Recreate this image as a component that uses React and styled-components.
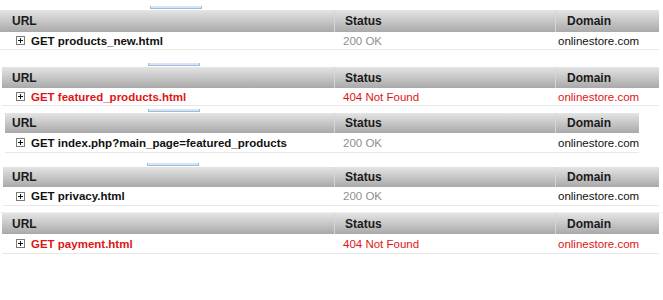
import React from "react";
import styled, { createGlobalStyle } from "styled-components";

const GlobalStyle = createGlobalStyle`
  html, body {
    margin: 0;
    padding: 0;
    background: #ffffff;
  }
  body {
    font-family: "Liberation Sans", Arial, sans-serif;
    font-size: 12px;
    color: #111;
  }
`;

const Page = styled.div`
  display: flex;
  flex-direction: column;
  width: 663px;
  height: 300px;
  overflow: hidden;
`;

// thin strip above each table: the scroll rail with its blue thumb
const Rail = styled.div`
  height: ${(p) => p.h}px;
  display: flex;
  align-items: flex-end;
  padding-left: ${(p) => p.inset}px;
  border-bottom: ${(p) => (p.line ? "1px solid #f0f0f0" : "none")};
`;

const Thumb = styled.div`
  width: 50px;
  height: 2px;
  margin-left: ${(p) => p.at}px;
  margin-bottom: 1px;
  background: #d6e4f4;
  border: 1px solid #9fbbe0;
  border-top: none;
`;

const Table = styled.div`
  margin-left: ${(p) => p.inset}px;
  width: ${(p) => p.width}px;
  display: grid;
  grid-template-columns: ${(p) => 334 - p.inset}px 221px 1fr;
`;

const HeadCell = styled.div`
  height: ${(p) => p.h}px;
  display: flex;
  align-items: center;
  padding-left: ${(p) => p.pad}px;
  font-weight: bold;
  font-size: 12px;
  color: #1a1a1a;
  background: linear-gradient(#e4e4e4 0%, #cdcdcd 40%, #a9a9a9 100%);
  border-left: ${(p) => (p.first ? "none" : "1px solid #d6d6d6")};
  box-sizing: border-box;
`;

const Cell = styled.div`
  height: ${(p) => p.h}px;
  display: flex;
  align-items: center;
  padding-left: ${(p) => p.pad}px;
  font-size: 11.5px;
  font-weight: ${(p) => (p.bold ? "bold" : "normal")};
  color: ${(p) => (p.failed ? "#e01515" : p.muted ? "#8f8f8f" : "#111")};
  border-bottom: 1px solid #e8e8e8;
  box-sizing: border-box;
  white-space: nowrap;
`;

const Expander = styled.span`
  display: inline-block;
  width: 7px;
  height: 7px;
  border: 1px solid #7a7a7a;
  margin-right: 6px;
  position: relative;
  background: #fff;
  &::before,
  &::after {
    content: "";
    position: absolute;
    background: #111;
  }
  &::before {
    left: 1px;
    top: 3px;
    width: 5px;
    height: 1px;
  }
  &::after {
    left: 3px;
    top: 1px;
    width: 1px;
    height: 5px;
  }
`;

const requests = [
  { rail: 10, thumb: 150, inset: 0, width: 659, head: 22, row: 18, path: "products_new.html", status: "200 OK", after: 5 },
  { rail: 12, thumb: 148, inset: 2, width: 657, head: 21, row: 18, path: "featured_products.html", status: "404 Not Found", after: 0 },
  { rail: 7, thumb: 148, inset: 5, width: 632, head: 20, row: 20, path: "index.php?main_page=featured_products", status: "200 OK", after: 0 },
  { rail: 14, thumb: 147, inset: 3, width: 656, head: 20, row: 19, path: "privacy.html", status: "200 OK", after: 0 },
  { rail: 6, thumb: null, inset: 2, width: 657, head: 21, row: 20, path: "payment.html", status: "404 Not Found", after: 0 },
];

function Request({ r }) {
  const failed = r.status.startsWith("404");
  return (
    <>
      <Rail h={r.rail} inset={r.inset} line={r.thumb === null}>
        {r.thumb !== null && <Thumb at={r.thumb - r.inset} />}
      </Rail>
      <Table inset={r.inset} width={r.width}>
        <HeadCell h={r.head} pad={12 - r.inset} first>URL</HeadCell>
        <HeadCell h={r.head} pad={10}>Status</HeadCell>
        <HeadCell h={r.head} pad={11}>Domain</HeadCell>
        <Cell h={r.row} pad={16 - r.inset} bold failed={failed}>
          <Expander />
          GET {r.path}
        </Cell>
        <Cell h={r.row} pad={9} failed={failed} muted>{r.status}</Cell>
        <Cell h={r.row} pad={3} failed={failed}>onlinestore.com</Cell>
      </Table>
      {r.after > 0 && <Rail h={r.after} inset={0} />}
    </>
  );
}

export default function App() {
  return (
    <Page>
      <GlobalStyle />
      {requests.map((r) => (
        <Request key={r.path} r={r} />
      ))}
    </Page>
  );
}
